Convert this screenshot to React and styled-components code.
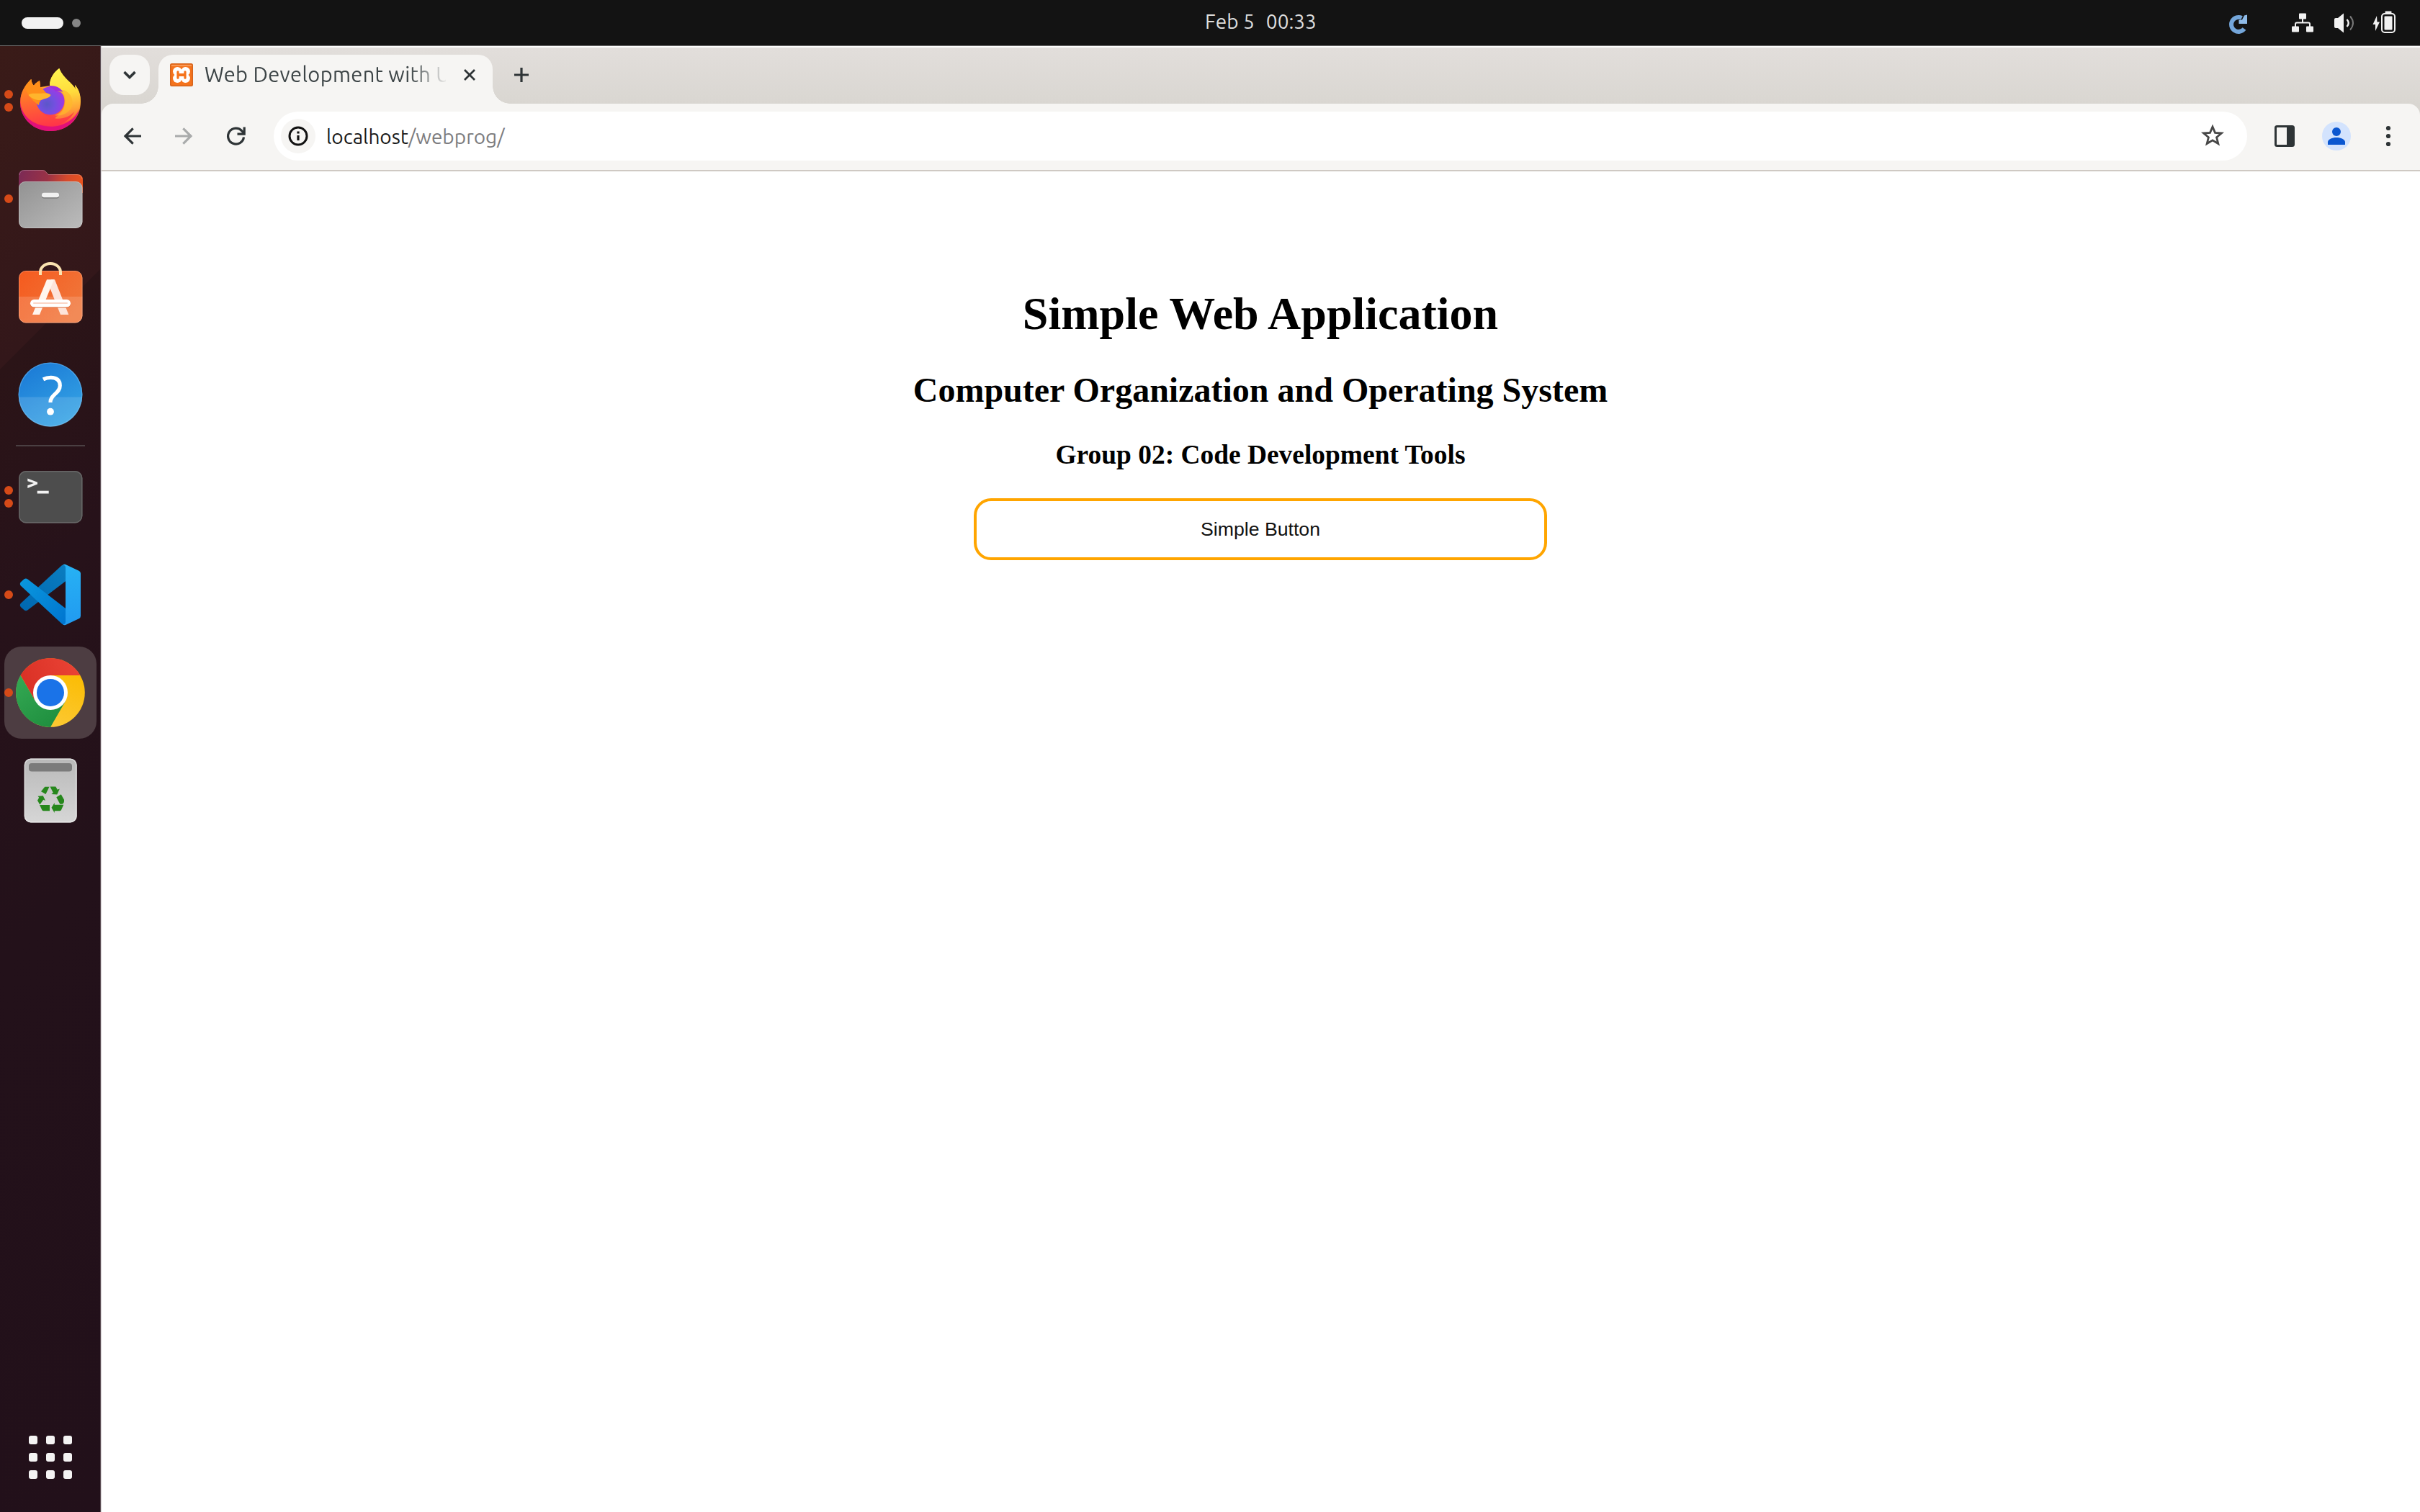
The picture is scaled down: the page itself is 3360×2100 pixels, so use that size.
import React from "react";
import styled, { createGlobalStyle } from "styled-components";

const GlobalStyle = createGlobalStyle`
  * { box-sizing: border-box; }
  html, body { margin: 0; background: #fff; }
  body { overflow: hidden; }
  svg { display: block; flex: none; overflow: visible; }
`;

const uiFont = `Ubuntu, "Noto Sans", "Open Sans", sans-serif`;

const Desktop = styled.div`
  width: 3360px;
  height: 2100px;
  display: grid;
  grid-template: 64px 1fr / 140px 1fr;
  font-family: ${uiFont};
`;

/* ---------- system bar ---------- */

const SystemBar = styled.header`
  grid-column: 1 / -1;
  display: grid;
  grid-template-columns: 1fr auto 1fr;
  align-items: center;
  padding: 0 33px 0 30px;
  background: #131313;
  border-bottom: 1px solid #6f6e6d;
  color: #dedede;
`;

const Workspaces = styled.div`
  display: flex;
  align-items: center;
  gap: 12px;
`;

const WorkspaceMark = styled.span`
  width: ${(p) => (p.$active ? 58 : 12)}px;
  height: ${(p) => (p.$active ? 16 : 12)}px;
  border-radius: 8px;
  background: ${(p) => (p.$active ? "#f2f2f2" : "#868686")};
`;

const Clock = styled.div`
  display: flex;
  gap: 16px;
  font-size: 28px;
  line-height: 38px;
  padding: 0 0 4px 141px;
  margin-right: -3px;
`;

const StatusIcons = styled.div`
  display: flex;
  justify-content: flex-end;
  align-items: center;
`;

const StatusIcon = styled.svg`
  margin-left: ${(p) => p.$gap || 0}px;
`;

/* ---------- dock ---------- */

const Dock = styled.nav`
  display: flex;
  flex-direction: column;
  align-items: center;
  padding: 12px 0 12px;
  border-right: 1px solid #584a50;
  background: linear-gradient(135deg, #3a1b18 0, #33171a 317px, #2b1417 318px, #27121a 560px, #23111a 900px, #22101a 100%);
`;

const DockItem = styled.div`
  position: relative;
  width: 128px;
  height: 128px;
  flex: none;
  display: flex;
  align-items: center;
  justify-content: center;
  margin-bottom: ${(p) => (p.$last ? 6 : 8)}px;
  border-radius: 24px;
  background: ${(p) => (p.$active ? "#4d3d42" : "transparent")};
`;

const Running = styled.div`
  position: absolute;
  left: 0;
  top: 0;
  bottom: 0;
  display: flex;
  flex-direction: column;
  justify-content: center;
  gap: 6px;
`;

const RunningDot = styled.i`
  width: 12px;
  height: 12px;
  border-radius: 50%;
  background: #d64a18;
`;

const DockSeparator = styled.hr`
  width: 96px;
  height: 2px;
  flex: none;
  margin: 0 0 6px;
  border: 0;
  background: #4a3f42;
`;

const AppGrid = styled.div`
  display: grid;
  grid-template-columns: repeat(3, 12px);
  gap: 12px;
  margin: auto 0 34px;
`;

const AppGridDot = styled.i`
  height: 12px;
  border-radius: 3px;
  background: #f4f3f3;
`;

/* ---------- browser ---------- */

const Browser = styled.main`
  min-width: 0;
  display: flex;
  flex-direction: column;
  border-left: 1px solid #d3cfd1;
  background: #fff;
`;

const Frame = styled.div`
  background: linear-gradient(#e2dedb 0, #d9d6d1 80px);
  border-top: 2px solid #fdfdfc;
`;

const TabStrip = styled.div`
  display: flex;
  height: 78px;
  padding: 10px 0 0 11px;
`;

const TabSearch = styled.div`
  width: 56px;
  height: 56px;
  border-radius: 20px;
  background: #f6f5f3;
  display: flex;
  align-items: center;
  justify-content: center;
`;

const Tab = styled.div`
  position: relative;
  width: 464px;
  height: 68px;
  margin-left: 12px;
  padding: 0 20px 12px 16px;
  display: flex;
  align-items: center;
  border-radius: 20px 20px 0 0;
  background: #f6f5f3;

  &::before,
  &::after {
    content: "";
    position: absolute;
    bottom: 0;
    width: 24px;
    height: 24px;
  }
  &::before {
    right: 100%;
    background: radial-gradient(circle at 0 0, transparent 23.5px, #f6f5f3 24px);
  }
  &::after {
    left: 100%;
    background: radial-gradient(circle at 100% 0, transparent 23.5px, #f6f5f3 24px);
  }
`;

const TabTitle = styled.span`
  width: 335px;
  height: 40px;
  margin: 0 21px 0 16px;
  overflow: hidden;
  white-space: nowrap;
  font-size: 29px;
  line-height: 39px;
  letter-spacing: 0.35px;
  color: #3c4446;
  mask-image: linear-gradient(90deg, #000 284px, transparent 338px);
`;

const NewTab = styled.div`
  display: flex;
  height: 56px;
  align-items: center;
  margin-left: 28px;
`;

const Toolbar = styled.div`
  display: flex;
  align-items: center;
  height: 94px;
  padding: 0 28px 2px 31px;
  border-bottom: 2px solid #cfc9c3;
  border-radius: 16px 16px 0 0;
  background: #f6f5f3;
`;

const NavButtons = styled.div`
  display: flex;
  gap: 47px;
`;

const Omnibox = styled.div`
  flex: 1;
  height: 68px;
  margin: 0 38px;
  padding: 0 32px 0 10px;
  display: flex;
  align-items: center;
  border-radius: 34px;
  background: #fff;
`;

const SiteInfo = styled.div`
  width: 48px;
  height: 48px;
  border-radius: 50%;
  background: #f6f5f3;
  display: flex;
  align-items: center;
  justify-content: center;
`;

const Address = styled.div`
  flex: 1;
  margin-left: 15px;
  padding-top: 1px;
  font-size: 28px;
  line-height: 38px;
  color: #1a1a1a;
`;

const AddressPath = styled.span`
  color: #7d7d80;
`;

const Avatar = styled.div`
  width: 40px;
  height: 40px;
  margin: 0 32px 0 38px;
  border-radius: 50%;
  overflow: hidden;
  background: #d3e3fd;
`;

/* ---------- page ---------- */

const Page = styled.section`
  flex: 1;
  display: flex;
  flex-direction: column;
  align-items: center;
  padding: 161px 1px 0 0;
  font-family: "Liberation Serif", "Times New Roman", serif;
  color: #000;
`;

const Title = styled.h1`
  margin: 0 0 41px;
  font-size: 64px;
  line-height: 74px;
`;

const Subtitle = styled.h2`
  margin: 0 0 40px;
  font-size: 48px;
  line-height: 56px;
`;

const Group = styled.h3`
  margin: 0 0 38px;
  font-size: 37.44px;
  line-height: 44px;
`;

const SimpleButton = styled.button`
  width: 796px;
  height: 86px;
  padding: 0;
  border: 4px solid #ffa500;
  border-radius: 24px;
  background: #fff;
  color: #111;
  font-family: "Liberation Sans", Arial, sans-serif;
  font-size: 26.67px;
`;

/* ---------- icons ---------- */

const FirefoxIcon = () => (
  <svg width="96" height="96" viewBox="0 0 96 96">
    <defs>
      <linearGradient id="ffBody" x1="0.75" y1="0.05" x2="0.3" y2="1">
        <stop offset="0" stopColor="#ffe847" />
        <stop offset="0.3" stopColor="#ffb52f" />
        <stop offset="0.55" stopColor="#ff6a36" />
        <stop offset="0.75" stopColor="#ff3a4a" />
        <stop offset="1" stopColor="#e3106f" />
      </linearGradient>
      <linearGradient id="ffFace" x1="0.3" y1="0" x2="0.5" y2="1">
        <stop offset="0" stopColor="#ff9a14" />
        <stop offset="0.45" stopColor="#ff6a30" />
        <stop offset="1" stopColor="#ff3648" />
      </linearGradient>
      <linearGradient id="ffFlame" x1="0.4" y1="0" x2="0.5" y2="1">
        <stop offset="0" stopColor="#fff44f" />
        <stop offset="0.45" stopColor="#ffdc3c" />
        <stop offset="0.75" stopColor="#ffa436" />
        <stop offset="1" stopColor="#ff5a40" />
      </linearGradient>
      <radialGradient id="ffGlobe" cx="0.38" cy="0.62" r="0.7">
        <stop offset="0" stopColor="#5b57c8" />
        <stop offset="0.4" stopColor="#7350e0" />
        <stop offset="0.75" stopColor="#9040e4" />
        <stop offset="1" stopColor="#b034d8" />
      </radialGradient>
    </defs>
    <path d="M21.3 18C16 23 6 34 6 50c0 22 18 40 42 40s42-17 42-41c0-8-3-18-8-23l1 6C80 25 65 17 60.300 3 54 7 47 16 47 27L34 29l-1-9c-4 2-7 5-8 7-2-2-3.500-5-3.700-9z" fill="url(#ffBody)" />
    <path d="M6 50c2 20 20 34 42 34 18 0 34-10 40-24-4 18-20 30-40 30C24 90 6 72 6 50z" fill="#e0107a" />
    <path d="M60.300 3C54 7 46.500 16 47 27c10 0 20 7 21.500 16 1.500 12-3 22-12 27-5 4-4 8 3 10 14-2 25-12 29-24 3-13 .5-22-6.500-30l1 6C79 23 66 17 60.300 3z" fill="url(#ffFlame)" />
    <path d="M21.300 18C16 23 7 33 6.500 47c-.5 22 18.500 36 40 36 17 0 29-8 35-20-9 9-20 12-33 8-12-3-19-12-19-26L34 29l-1-9c-4 2-7 5-8 7-2-2-3.500-5-3.700-9z" fill="url(#ffFace)" />
    <circle cx="48" cy="48" r="19.500" fill="url(#ffGlobe)" />
    <path d="M57 34.500c8 1 12 8 11 16-1 9-6 15-14 17.500 8 2 17-2 22.500-9 4-8 2-19-6-24-4-2.500-9-3-13.500-.5z" fill="#ffb62c" opacity=".7" />
    <path d="M48 27c8 0 14 3 17.500 9-4-2-7-1.500-10-1-3-4-7-6-11-7z" fill="#a030d8" />
    <path d="M21.300 18c.2 4 1.700 7 3.700 9 1-2 4-5 8-7l1 9c2 1 5 4 7 7 4 3 7 2 7 4-2 5-9 4-13 7-2 2-3 4-3 7-6-4-14-10-18-22 1-6 4-10.500 7.300-14z" fill="#ff8f1a" />
    <path d="M17.500 40c3-4 13-1.500 20-2.500 4 0 8 0 11 2.500-2 5-8 4-12 6.500-6 2-15-1.500-19-6.500z" fill="#ffb52c" />
  </svg>
);

const FilesIcon = () => (
  <svg width="96" height="96" viewBox="0 0 96 96">
    <defs>
      <linearGradient id="flBack" x1="0" y1="0.3" x2="1" y2="0.4">
        <stop offset="0" stopColor="#7c2a55" />
        <stop offset="0.45" stopColor="#9a3246" />
        <stop offset="0.75" stopColor="#d64a2c" />
        <stop offset="1" stopColor="#e95420" />
      </linearGradient>
      <linearGradient id="flFront" x1="0" y1="0" x2="1" y2="1">
        <stop offset="0" stopColor="#929292" />
        <stop offset="1" stopColor="#bcbcbc" />
      </linearGradient>
    </defs>
    <path d="M4 40V16q0-8 8-8h25q3 0 4.500 2l3.500 4h40q8 0 8 8v18z" fill="url(#flBack)" />
    <path d="M5 15q1-6.500 7-6.500h25q3 0 4.500 2l3.500 4h40q6 0 7 6" fill="none" stroke="#fff" strokeOpacity=".25" />
    <rect x="4" y="24" width="88.500" height="65" rx="9" fill="url(#flFront)" />
    <rect x="4.500" y="24.500" width="87.500" height="64" rx="8.500" fill="none" stroke="#fff" strokeOpacity=".25" />
    <rect x="36" y="41" width="24" height="6.500" rx="3" fill="#6f6f6f" />
    <rect x="36" y="39.700" width="24" height="6.500" rx="3" fill="#f1f1f1" />
  </svg>
);

const SoftwareIcon = () => (
  <svg width="96" height="96" viewBox="0 0 96 96">
    <defs>
      <linearGradient id="swBody" x1="0" y1="0" x2="1" y2="0.6">
        <stop offset="0" stopColor="#f55a1e" />
        <stop offset="1" stopColor="#f0763a" />
      </linearGradient>
      <clipPath id="swClip">
        <rect x="4" y="12" width="88.500" height="72.500" rx="10" />
      </clipPath>
    </defs>
    <g clipPath="url(#swClip)">
      <rect x="4" y="12" width="89" height="73" fill="url(#swBody)" />
      <rect x="4" y="48" width="89" height="37" fill="#fff" opacity=".15" />
    </g>
    <rect x="4.500" y="12.500" width="87.500" height="71.500" rx="9.500" fill="none" stroke="#fff" strokeOpacity=".25" />
    <path d="M34 18V14a14 12 0 0 1 28 0v4" fill="none" stroke="#fbe3b0" strokeWidth="4" />
    <path d="M54 24.300h-5L45 30l17 43h11.300z" fill="#fde4da" />
    <path d="M43 24.300h10L33 73H23z" fill="#fff5ee" />
    <rect x="20" y="53" width="56" height="11" rx="5.500" fill="#d9622f" opacity=".6" />
    <rect x="20" y="52" width="56" height="10.500" rx="5.200" fill="#fff" />
    <path d="M25 57h46" stroke="#fbd5c5" strokeWidth="2" strokeLinecap="round" />
  </svg>
);

const HelpIcon = () => (
  <svg width="96" height="96" viewBox="0 0 96 96">
    <defs>
      <linearGradient id="hpTop" x1="0.2" y1="0" x2="0.8" y2="1">
        <stop offset="0" stopColor="#1b7ad6" />
        <stop offset="1" stopColor="#36a6e6" />
      </linearGradient>
    </defs>
    <circle cx="48" cy="48" r="44.500" fill="url(#hpTop)" />
    <path d="M3.600 51.500a44.500 44.500 0 0 0 88.800 0z" fill="#fff" opacity=".13" />
    <circle cx="48" cy="48" r="43.800" fill="none" stroke="#8cc8f2" strokeOpacity=".4" strokeWidth="1.200" />
    <path d="M38 26.800Q43 24.300 48.500 24.300C57 24.300 61.300 28.500 61.300 35.500c0 11-13.800 12.500-13.300 23.500" fill="none" stroke="#fff" strokeWidth="5.200" />
    <circle cx="48" cy="71.700" r="4.900" fill="#fff" />
  </svg>
);

const TerminalIcon = () => (
  <svg width="96" height="96" viewBox="0 0 96 96">
    <rect x="4" y="12" width="88.500" height="72.500" rx="10" fill="#4d4d4d" />
    <rect x="4.700" y="12.700" width="87" height="71" rx="9.400" fill="none" stroke="#676767" strokeWidth="1.400" />
    <path d="M16.300 22.500V26.200L24.800 29.100 16.300 32.200V36L30 30.600V27.700z" fill="#f2f2f2" />
    <path d="M29.700 41.600h16" stroke="#f2f2f2" strokeWidth="3.800" />
  </svg>
);

const CodeIcon = () => (
  <svg width="96" height="96" viewBox="0 0 96 96">
    <defs>
      <linearGradient id="vsLight" x1="0" y1="0" x2="0" y2="1">
        <stop offset="0" stopColor="#27b2f4" />
        <stop offset="1" stopColor="#219af0" />
      </linearGradient>
      <linearGradient id="vsMid" x1="0" y1="0" x2="1" y2="1">
        <stop offset="0" stopColor="#0a98de" />
        <stop offset="1" stopColor="#0074cf" />
      </linearGradient>
      <linearGradient id="vsDark" x1="0" y1="1" x2="1" y2="0">
        <stop offset="0" stopColor="#0067b0" />
        <stop offset="1" stopColor="#0a7dc0" />
      </linearGradient>
    </defs>
    <path d="M63.500 7.500Q66 5.500 69 6V29.300L16.500 69.300Q14 71 11.500 69.300L6.800 65q-2-2.500 0-5z" fill="url(#vsDark)" />
    <path d="M6.800 35.500q-2-2.500 0-5l4.700-4.200Q14 24.700 16.500 26.500L69 67v23q-3 .5-5.500-2z" fill="url(#vsMid)" />
    <path d="M69 6l18.500 8.800Q90 16 90 18.500v59Q90 80 87.500 81.200L69 90q-2 .5-4-.8 4 .3 4-3.700v-75Q69 6.500 65 6.800 67 5.300 69 6z" fill="url(#vsLight)" />
  </svg>
);

const ChromeIcon = () => (
  <svg width="96" height="96" viewBox="0 0 96 96">
    <defs>
      <linearGradient id="crRed" x1="0" y1="0.6" x2="1" y2="0.3">
        <stop offset="0" stopColor="#d93025" />
        <stop offset="1" stopColor="#ea4335" />
      </linearGradient>
      <linearGradient id="crGreen" x1="0.8" y1="1" x2="0.1" y2="0">
        <stop offset="0" stopColor="#1e8e3e" />
        <stop offset="1" stopColor="#34a853" />
      </linearGradient>
      <linearGradient id="crYellow" x1="0.5" y1="1" x2="0.8" y2="0.2">
        <stop offset="0" stopColor="#fcc934" />
        <stop offset="1" stopColor="#fbbc04" />
      </linearGradient>
    </defs>
    <circle cx="48" cy="48" r="47.800" fill="url(#crYellow)" />
    <path d="M6.430 24A48 48 0 0 1 89.570 24H48L27.200 60z" fill="url(#crRed)" />
    <path d="M6.430 24A48 48 0 0 0 48 96L68.800 60 48 48 27.200 60z" fill="url(#crGreen)" />
    <circle cx="48" cy="48" r="24" fill="#fff" />
    <circle cx="48" cy="48" r="19" fill="#1a73e8" />
  </svg>
);

const TrashIcon = () => (
  <svg width="96" height="96" viewBox="0 0 96 96">
    <defs>
      <linearGradient id="trBody" x1="0" y1="0" x2="0" y2="1">
        <stop offset="0" stopColor="#b9b9b9" />
        <stop offset="1" stopColor="#d6d6d6" />
      </linearGradient>
    </defs>
    <rect x="11.700" y="3.500" width="73" height="89" rx="9" fill="url(#trBody)" />
    <rect x="12.400" y="4.200" width="71.600" height="87.600" rx="8.400" fill="none" stroke="#eee" strokeOpacity=".7" strokeWidth="1.400" />
    <rect x="18" y="10" width="60" height="11.500" rx="4" fill="#7b7b7b" />
    <g fill="#26871c">
      <path d="M40.300 42.700h6.200L41.500 53 35 49.300z" />
      <path d="M47.500 42.500h7.800l2.500 4.200 3-1.200-3.500 8-8-.6 2.500-1.800z" />
      <path d="M30.500 55.800l7.300-.6 3.200 6.800-2.700-1.300L33.300 67.500 30 61.700l2.200-3.900z" />
      <path d="M33 68h14v8.200h-8.500q-1.500 0-2.300-1.500z" />
      <path d="M56.300 57.200l6.500-3.900 4.200 7.500q.5 5-2.700 6h-3z" />
      <path d="M49.500 71.800l4.200-6.800v2.800h12.600L63 75q-.8 1.200-2.300 1.200h-7v2.700z" />
    </g>
  </svg>
);

const FaviconXampp = () => (
  <svg width="32" height="32" viewBox="0 0 32 32">
    <rect width="32" height="32" rx="2.500" fill="#d6651c" />
    <rect x="1.500" y="1.500" width="29" height="29" rx="1.500" fill="#f5731c" />
    <path d="M2 3h28" stroke="#f8a468" strokeWidth="1.500" />
    <g fill="#fff">
      <circle cx="10.300" cy="11.200" r="6.200" />
      <circle cx="21.700" cy="11.200" r="6.200" />
      <circle cx="10.300" cy="20.800" r="6.200" />
      <circle cx="21.700" cy="20.800" r="6.200" />
      <rect x="8" y="10" width="16" height="12" />
    </g>
    <path d="M11 11.800v8.400M21 11.800v8.400" fill="none" stroke="#f5731c" strokeWidth="3.200" strokeLinecap="round" />
    <path d="M11 16h10" stroke="#f5731c" strokeWidth="4" />
  </svg>
);

const Glyph = ({ size = 24, color = "#2e3436", width = 3.6, cap = "butt", children, ...rest }) => (
  <svg width={size} height={size} viewBox={`0 0 ${size} ${size}`} fill="none" stroke={color} strokeWidth={width} strokeLinecap={cap} {...rest}>
    {children}
  </svg>
);

const dockItems = [
  { name: "firefox", Icon: FirefoxIcon, windows: 2 },
  { name: "files", Icon: FilesIcon, windows: 1 },
  { name: "software", Icon: SoftwareIcon, windows: 0 },
  { name: "help", Icon: HelpIcon, windows: 0, last: true },
  { name: "terminal", Icon: TerminalIcon, windows: 2 },
  { name: "code", Icon: CodeIcon, windows: 1 },
  { name: "chrome", Icon: ChromeIcon, windows: 1, active: true },
  { name: "trash", Icon: TrashIcon, windows: 0 },
];

export default function App() {
  return (
    <>
      <GlobalStyle />
      <Desktop>
        <SystemBar>
          <Workspaces>
            <WorkspaceMark $active />
            <WorkspaceMark />
          </Workspaces>
          <Clock>
            <span>Feb 5</span>
            <span>00:33</span>
          </Clock>
          <StatusIcons>
            <StatusIcon width="28" height="32" viewBox="0 0 28 32">
              <path d="M23 24A10 10 0 1 1 19.500 9" fill="none" stroke="#74a6da" strokeWidth="6" />
              <path d="M27 4.500v12.500H15.500v-5l4.500-.5 3-6z" fill="#8fbbe8" />
            </StatusIcon>
            <StatusIcon $gap={60} width="32" height="32" viewBox="0 0 32 32" fill="#f2f2f2">
              <rect x="11" y="2.500" width="10" height="8" rx="1" />
              <rect x="1" y="20.500" width="10" height="8" rx="1" />
              <rect x="21" y="20.500" width="10" height="8" rx="1" />
              <path d="M16 10v5.500M6 21v-3.500q0-2 2-2h16q2 0 2 2V21" fill="none" stroke="#f2f2f2" strokeWidth="2" />
            </StatusIcon>
            <StatusIcon $gap={26} width="32" height="32" viewBox="0 0 32 32" fill="none" stroke="#f2f2f2" strokeWidth="2">
              <path d="M2 11q0-2 2-2h3l8-6.500v27L7 23H4q-2 0-2-2z" fill="#f2f2f2" stroke="none" />
              <path d="M19.500 11q4.500 5 0 10" strokeWidth="2.400" />
              <path d="M24 6.500q8 9.500 0 19" stroke="#777" />
            </StatusIcon>
            <StatusIcon $gap={22} width="34" height="34" viewBox="0 0 34 34" fill="#f2f2f2">
              <path d="M7 7L1.500 19H5l0 9 6-12.500H7.500z" />
              <rect x="14" y="4" width="18" height="26" rx="4" fill="none" stroke="#f2f2f2" strokeWidth="2" />
              <rect x="18.500" y="0.500" width="9" height="3" rx="1" />
              <rect x="17.500" y="7.500" width="11" height="19" rx="1" />
            </StatusIcon>
          </StatusIcons>
        </SystemBar>

        <Dock>
          {dockItems.map(({ name, Icon, windows, active, last }) => (
            <React.Fragment key={name}>
              <DockItem $active={active} $last={last}>
                <Running>
                  {Array.from({ length: windows }, (_, i) => (
                    <RunningDot key={i} />
                  ))}
                </Running>
                <Icon />
              </DockItem>
              {last && <DockSeparator />}
            </React.Fragment>
          ))}
          <AppGrid>
            {Array.from({ length: 9 }, (_, i) => (
              <AppGridDot key={i} />
            ))}
          </AppGrid>
        </Dock>

        <Browser>
          <Frame>
            <TabStrip>
              <TabSearch>
                <Glyph size={24}>
                  <path d="M4.500 8l7.500 7.500L19.500 8" />
                </Glyph>
              </TabSearch>
              <Tab>
                <FaviconXampp />
                <TabTitle>Web Development with U</TabTitle>
                <Glyph size={24} width={2.8}>
                  <path d="M5 5l14 14M19 5l-14 14" />
                </Glyph>
              </Tab>
              <NewTab>
                <Glyph size={24} width={3.2}>
                  <path d="M12 2v20M2 12h20" />
                </Glyph>
              </NewTab>
            </TabStrip>
            <Toolbar>
              <NavButtons>
                <Glyph size={24} width={3.2}>
                  <path d="M24 12H3M12.700 1.300L2 12l10.700 10.700" />
                </Glyph>
                <Glyph size={24} width={3.2} color="#a9abab">
                  <path d="M0 12h21M11.300 1.300L22 12 11.300 22.700" />
                </Glyph>
                <Glyph size={28} height={24} viewBox="0 2 28 24" width={3.2}>
                  <path d="M24.500 15.500A11 11 0 1 1 22 7l2.500 3" />
                  <path d="M25.200 1.500v9.700H15.500" />
                </Glyph>
              </NavButtons>
              <Omnibox>
                <SiteInfo>
                  <Glyph size={28} width={3} color="#111">
                    <circle cx="14" cy="14" r="12" />
                    <path d="M14 13v7M14 7.500v3" strokeWidth="3.200" />
                  </Glyph>
                </SiteInfo>
                <Address>
                  localhost<AddressPath>/webprog/</AddressPath>
                </Address>
                <Glyph size={32} width={2.8} color="#474747">
                  <path d="M16 3l3.500 8.300 9 .7-6.900 5.800 2.200 8.700-7.800-4.700L8.200 26.500l2.200-8.700L3.500 12l9-.7z" />
                </Glyph>
              </Omnibox>
              <Glyph size={28} height={30} viewBox="0 0 28 30" width={3}>
                <rect x="1.500" y="1.500" width="25" height="27" rx="2" />
                <path d="M17 1h8.500q1.500 0 1.500 1.500v25q0 1.500-1.500 1.500H17z" fill="#2e3436" stroke="none" />
              </Glyph>
              <Avatar>
                <svg width="40" height="40" viewBox="0 0 40 40" fill="#0b57d0">
                  <circle cx="20" cy="14" r="6" />
                  <path d="M8 32v-3.500c0-4 6-6.500 12-6.500s12 2.500 12 6.500V32z" />
                </svg>
              </Avatar>
              <svg width="36" height="28" viewBox="0 0 36 28" fill="#2e3436">
                <circle cx="20" cy="3" r="3.100" />
                <circle cx="20" cy="14" r="3.100" />
                <circle cx="20" cy="25" r="3.100" />
              </svg>
            </Toolbar>
          </Frame>
          <Page>
            <Title>Simple Web Application</Title>
            <Subtitle>Computer Organization and Operating System</Subtitle>
            <Group>Group 02: Code Development Tools</Group>
            <SimpleButton>Simple Button</SimpleButton>
          </Page>
        </Browser>
      </Desktop>
    </>
  );
}
